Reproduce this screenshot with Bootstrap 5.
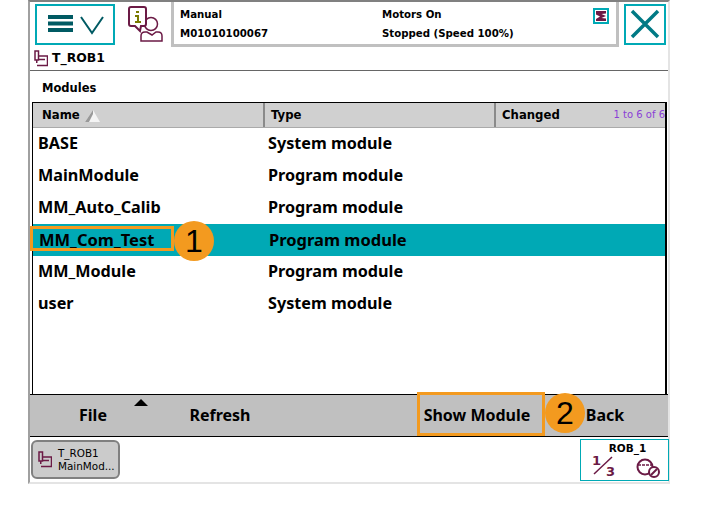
<!DOCTYPE html>
<html lang="en">
<head>
    <meta charset="UTF-8">
    <meta name="viewport" content="width=device-width, initial-scale=1.0">
    <title>Modules</title>
    <link href="https://cdn.jsdelivr.net/npm/bootstrap@5.3.0/dist/css/bootstrap.min.css" rel="stylesheet">
    <style>
        body {
            font-family: "DejaVu Sans", sans-serif;
            background: #fff;
            color: #000;
            overflow: hidden;
        }
        .pendant {
            position: relative;
            width: 642px;
            height: 484px;
            margin-left: 28px;
            border-top: 2px solid #808080;
            border-left: 2px solid #a0a0a0;
            border-right: 2px solid #e4e4e4;
            border-bottom: 2px solid #e4e4e4;
        }
        .top-row { height: 44px; }
        .teal-btn {
            border: 2px solid #00a9b5;
            background: #fff;
            padding: 0;
            border-radius: 0;
        }
        .menu-btn { width: 80px; height: 41px; margin: 2px 0 0 5px; }
        .info-icon { width: 38px; height: 44px; margin-left: 13px; }
        .status-box {
            width: 448px;
            height: 45px;
            margin-left: 5px;
            border-left: 3px solid #c0c0c0;
            border-right: 3px solid #c0c0c0;
            border-bottom: 3px solid #c0c0c0;
            font-size: 10.2px;
            font-weight: 700;
            line-height: 19px;
            padding: 3px 0 0 6px;
            position: relative;
        }
        .status-col { width: 202px; }
        .mode-flag { position: absolute; right: 7px; top: 6px; width: 16px; height: 16px; }
        .close-btn { width: 42px; height: 41px; margin: 2px 0 0 5px; }
        .task-row {
            height: 25px;
            border-bottom: 1px solid #666;
            font-size: 12.4px;
            font-weight: 700;
            padding-left: 4px;
            gap: 4px;
        }
        .title-row { height: 31px; padding: 9px 0 0 12px; font-size: 11.5px; font-weight: 700; line-height: 16px; }
        .mod-table {
            margin-left: 2px;
            width: 635px;
            height: 292px;
            border: 1px solid #000;
            border-bottom: 0;
            border-right-width: 2px;
            background: #fff;
        }
        .mod-head {
            height: 25px;
            background: #d0d0d0;
            font-size: 11.7px;
            font-weight: 700;
            border-bottom: 1px solid #aaa;
            line-height: 24px;
            padding-left: 1px;
        }
        .head-name { width: 231px; padding-left: 8px; border-right: 2px solid #8a8a8a; }
        .head-type { width: 231px; padding-left: 6px; border-right: 2px solid #8a8a8a; }
        .head-chg { padding-left: 6px; flex: 1; position: relative; }
        .page-count { position: absolute; right: 0; top: 0; font-size: 10px; font-weight: 400; color: #8a3fd6; }
        .mod-row { height: 32px; font-family: "Noto Sans", sans-serif; font-size: 16.2px; font-weight: 700; line-height: 30px; padding-left: 5px; }
        .mod-row span:first-child { display: inline-block; width: 230px; }
        .mod-row.picked { background: #00a9b5; font-size: 16.5px; line-height: 31px; padding-left: 6px; }
        .cmd-bar {
            height: 43px;
            background: #c0c0c0;
            border-top: 1px solid #000;
            border-bottom: 1px solid #000;
            font-family: "Noto Sans", sans-serif;
            font-size: 16px;
            font-weight: 700;
            position: relative;
        }
        .cmd-item { position: absolute; top: 0; line-height: 40px; transform: translateX(-50%); white-space: nowrap; }
        .cmd-arrow {
            position: absolute; left: 104px; top: 4px;
            border-left: 7px solid transparent;
            border-right: 7px solid transparent;
            border-bottom: 7px solid #000;
        }
        .bottom-row { height: 47px; }
        .task-btn {
            width: 89px; height: 39px; margin: 3px 0 0 1px;
            background: #cbcbcb;
            border: 2px solid #808080;
            border-radius: 6px;
            font-size: 10.4px;
            line-height: 13px;
            gap: 6px;
            padding-left: 5px;
        }
        .robot-box {
            width: 89px; height: 42px; margin: 2px -1px 0 auto;
            border: 1px solid #00a9b5;
            font-size: 10.5px;
            font-weight: 700;
            position: relative;
            text-align: center;
            line-height: 17px;
            padding-left: 6px;
        }
        .robot-box svg { position: absolute; left: 11px; top: 13px; }
        .mark-box { position: absolute; border: 3px solid #f39a1f; }
        .mark-num {
            position: absolute;
            width: 40px; height: 40px;
            border-radius: 50%;
            background: #f39a1f;
            font-family: "Liberation Sans", sans-serif;
            font-size: 32px;
            line-height: 40px;
            text-align: center;
        }
    </style>
</head>
<body>
    <div class="pendant">
        <div class="top-row d-flex">
            <button class="teal-btn menu-btn" aria-label="Menu">
                <svg width="76" height="37" viewBox="0 0 76 37">
                    <path d="M11 9h25v4H11zM11 15.500h25v4H11zM11 22h25v4H11z" fill="#005a63"/>
                    <path d="M44 11l11 16 11-16" fill="none" stroke="#005a63" stroke-width="2"/>
                </svg>
            </button>
            <svg class="info-icon" viewBox="0 0 38 44">
                <circle cx="23" cy="22" r="6.500" fill="#fff" stroke="#6b1a45" stroke-width="1.500"/>
                <path d="M3 5h13q2 0 2 2v15q0 2-2 2h-3l-1 5-5-5H3q-2 0-2-2V7q0-2 2-2z" fill="#fff" stroke="#6b1a45" stroke-width="2"/>
                <path d="M8 9h3v2H8zM7 13h4v6h2v2H7v-2h2v-4H7z" fill="#7a7a00"/>
                <path d="M13 39v-5q0-4 4-4h2l5 3 4-3h2q4 0 4 4v5z" fill="#fff" stroke="#6b1a45" stroke-width="1.500"/>
            </svg>
            <div class="status-box d-flex">
                <div class="status-col"><div>Manual</div><div>M01010100067</div></div>
                <div><div>Motors On</div><div>Stopped (Speed 100%)</div></div>
                <svg class="mode-flag" viewBox="0 0 16 16">
                    <rect x="1" y="1" width="14" height="14" fill="#fff" stroke="#00a9b5" stroke-width="2"/>
                    <path d="M3 3h10v2.500L8.500 6l4.500 2-4.500 2 4.500.5V13H3v-2l4-2.500L3 6.500z" fill="#6b1a45"/>
                </svg>
            </div>
            <button class="teal-btn close-btn" aria-label="Close">
                <svg width="38" height="37" viewBox="0 0 38 37">
                    <path d="M6 5l26 26M32 5L6 31" stroke="#007a85" stroke-width="3.500" fill="none"/>
                </svg>
            </button>
        </div>
        <div class="task-row d-flex align-items-center">
            <svg width="14" height="17" viewBox="0 0 14 17">
                <path d="M1 1h3.500v9H1zM2.750 10v3M5 6h8.500v9.500H3M5 9.500h6" fill="none" stroke="#6b1a45" stroke-width="1.500"/>
            </svg>
            <span>T_ROB1</span>
        </div>
        <div class="title-row">Modules</div>
        <div class="mod-table">
            <div class="mod-head d-flex">
                <div class="head-name">Name
                    <svg width="17" height="14" viewBox="0 0 17 14">
                        <path d="M1 13L9 1l7 12z" fill="#f4f4f4"/><path d="M1 13L9 1v4l-4 8z" fill="#999"/>
                    </svg>
                </div>
                <div class="head-type">Type</div>
                <div class="head-chg">Changed<span class="page-count">1 to 6 of 6</span></div>
            </div>
            <div class="mod-row"><span>BASE</span><span>System module</span></div>
            <div class="mod-row"><span>MainModule</span><span>Program module</span></div>
            <div class="mod-row"><span>MM_Auto_Calib</span><span>Program module</span></div>
            <div class="mod-row picked"><span>MM_Com_Test</span><span>Program module</span></div>
            <div class="mod-row"><span>MM_Module</span><span>Program module</span></div>
            <div class="mod-row"><span>user</span><span>System module</span></div>
        </div>
        <div class="cmd-bar">
            <span class="cmd-arrow"></span>
            <span class="cmd-item" style="left: 63px">File</span>
            <span class="cmd-item" style="left: 190px">Refresh</span>
            <span class="cmd-item" style="left: 447px">Show Module</span>
            <span class="cmd-item" style="left: 575px">Back</span>
        </div>
        <div class="bottom-row d-flex">
            <div class="task-btn d-flex align-items-center">
                <svg width="14" height="17" viewBox="0 0 14 17">
                    <path d="M1 1h3.500v9H1zM2.750 10v3M5 6h8.500v9.500H3M5 9.500h6" fill="none" stroke="#6b1a45" stroke-width="1.500"/>
                </svg>
                <div>T_ROB1<br>MainMod...</div>
            </div>
            <div class="robot-box">ROB_1
                <svg width="70" height="26" viewBox="0 0 70 26">
                    <text x="0" y="12" font-size="13" font-weight="700" fill="#6b1a45" font-family="DejaVu Sans">1</text>
                    <path d="M2 21L20 4" stroke="#6b1a45" stroke-width="1.500"/>
                    <text x="14" y="23" font-size="13" font-weight="700" fill="#6b1a45" font-family="DejaVu Sans">3</text>
                    <circle cx="53" cy="14" r="7.500" fill="#fff" stroke="#6b1a45" stroke-width="2"/>
                    <path d="M46 12h15" stroke="#6b1a45" stroke-width="1.500" stroke-dasharray="3 1"/>
                    <circle cx="62" cy="19" r="5" fill="#fff" stroke="#6b1a45" stroke-width="2"/>
                    <path d="M59 22l6-6" stroke="#6b1a45" stroke-width="2"/>
                </svg>
            </div>
        </div>
        <div class="mark-box" style="left: 0; top: 224px; width: 144px; height: 25px"></div>
        <div class="mark-num" style="left: 144px; top: 219px">1</div>
        <div class="mark-box" style="left: 387px; top: 390px; width: 128px; height: 44px"></div>
        <div class="mark-num" style="left: 515px; top: 391px">2</div>
    </div>
    <script src="https://cdn.jsdelivr.net/npm/bootstrap@5.3.0/dist/js/bootstrap.bundle.min.js"></script>
</body>
</html>
